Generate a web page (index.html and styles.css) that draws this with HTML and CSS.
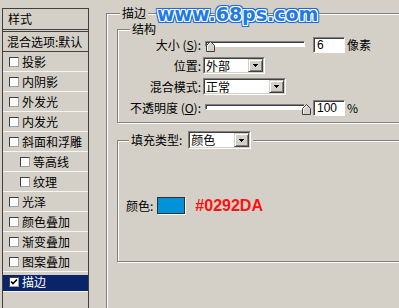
FILE: index.html
```html
<!DOCTYPE html>
<html lang="zh-CN">
<head>
    <meta charset="UTF-8">
    <title>图层样式 - 描边</title>
    <link rel="stylesheet" href="styles.css">
</head>
<body>
<div class="dialog">

    <!-- left: style list -->
    <div class="style-list">
        <div class="list-head">样式</div>
        <div class="list-blend">混合选项:默认</div>
        <div class="list-item"><span class="check"></span>投影</div>
        <div class="list-item"><span class="check"></span>内阴影</div>
        <div class="list-item"><span class="check"></span>外发光</div>
        <div class="list-item"><span class="check"></span>内发光</div>
        <div class="list-item"><span class="check"></span>斜面和浮雕</div>
        <div class="list-item sub"><span class="check"></span>等高线</div>
        <div class="list-item sub"><span class="check"></span>纹理</div>
        <div class="list-item"><span class="check"></span>光泽</div>
        <div class="list-item"><span class="check"></span>颜色叠加</div>
        <div class="list-item"><span class="check"></span>渐变叠加</div>
        <div class="list-item"><span class="check"></span>图案叠加</div>
        <div class="list-item selected">
            <span class="check"><svg width="8" height="8" viewBox="0 0 8 8"><path d="M1 3.5l2 2 4-4" fill="none" stroke="#000" stroke-width="1.6"/></svg></span>描边
        </div>
    </div>

    <!-- right: stroke settings -->
    <div class="stroke-box">
        <span class="legend">描边</span>

        <div class="group structure">
            <span class="legend">结构</span>
            <div class="field">
                <label>大小 (<u>S</u>):</label>
                <div class="slider">
                    <span class="track"></span>
                    <svg class="thumb" style="left:1px" width="9" height="11" viewBox="0 0 9 11"><path d="M0.5 10.5V4.5L4.5 0.5L8.5 4.5V10.5Z" fill="#d4d0c8" stroke="#404040"/><path d="M1.5 9.5V4.9L4.5 1.9" fill="none" stroke="#fff"/></svg>
                </div>
                <span class="textbox">6</span>
                <span class="unit">像素</span>
            </div>
            <div class="field">
                <label>位置:</label>
                <div class="select pos">
                    <div class="select-inner">
                        <span class="select-value">外部</span>
                        <span class="select-btn"><svg width="5" height="3" viewBox="0 0 5 3"><path d="M0 0h5v1H0zM1 1h3v1H1zM2 2h1v1H2z" fill="#000"/></svg></span>
                    </div>
                </div>
            </div>
            <div class="field">
                <label>混合模式:</label>
                <div class="select mode">
                    <div class="select-inner">
                        <span class="select-value">正常</span>
                        <span class="select-btn"><svg width="5" height="3" viewBox="0 0 5 3"><path d="M0 0h5v1H0zM1 1h3v1H1zM2 2h1v1H2z" fill="#000"/></svg></span>
                    </div>
                </div>
            </div>
            <div class="field">
                <label>不透明度 (<u>O</u>):</label>
                <div class="slider">
                    <span class="track"></span>
                    <svg class="thumb" style="left:97px" width="9" height="11" viewBox="0 0 9 11"><path d="M0.5 10.5V4.5L4.5 0.5L8.5 4.5V10.5Z" fill="#d4d0c8" stroke="#404040"/><path d="M1.5 9.5V4.9L4.5 1.9" fill="none" stroke="#fff"/></svg>
                </div>
                <span class="textbox">100</span>
                <span class="unit">%</span>
            </div>
        </div>

        <div class="group fill">
            <div class="legend fill-legend">
                <span>填充类型:</span>
                <div class="select type">
                    <div class="select-inner">
                        <span class="select-value">颜色</span>
                        <span class="select-btn"><svg width="5" height="3" viewBox="0 0 5 3"><path d="M0 0h5v1H0zM1 1h3v1H1zM2 2h1v1H2z" fill="#000"/></svg></span>
                    </div>
                </div>
            </div>
            <div class="color-row">
                <span>颜色:</span>
                <span class="swatch"></span>
                <span class="hex">#0292DA</span>
            </div>
        </div>
    </div>

    <div class="watermark">www.68ps.com</div>
</div>
</body>
</html>
```

FILE: styles.css
```css
body {
    margin: 0;
    background: #d4d0c8;
    font-family: "Noto Sans CJK SC", "Liberation Sans", sans-serif;
    font-size: 12px;
    color: #000;
    overflow: hidden;
}

.dialog {
    position: relative;
    display: flex;
    align-items: flex-start;
    width: 399px;
    height: 308px;
    padding: 8px 0 0 2px;
    box-sizing: border-box;
    overflow: hidden;
}

/* Style list */
.style-list {
    flex-shrink: 0;
    width: 85px;
    height: 320px;
    border: 1px solid #404040;
}

.list-head {
    height: 20px;
    line-height: 20px;
    padding-left: 5px;
    border-bottom: 3px double #404040;
}

.list-blend {
    height: 19px;
    line-height: 19px;
    padding-left: 4px;
    border-bottom: 1px solid #404040;
    white-space: nowrap;
}

.list-item {
    display: flex;
    align-items: center;
    height: 19px;
    line-height: 19px;
    padding-left: 6px;
    border-bottom: 1px solid #f6f5f2;
}

.list-item.sub {
    padding-left: 17px;
}

.list-item.selected {
    color: #fff;
    background: linear-gradient(#0a246a, #0a246a) no-repeat 0 3px / 100% 16px;
}

.check {
    display: flex;
    align-items: center;
    justify-content: center;
    width: 10px;
    height: 10px;
    margin-right: 3px;
    box-sizing: border-box;
    border: 1px solid;
    border-color: #404040 #a0a0a0 #a0a0a0 #404040;
    background: #fff;
}

/* Stroke settings */
.stroke-box {
    position: relative;
    flex-shrink: 0;
    width: 320px;
    height: 320px;
    margin: 5px 0 0 17px;
    padding: 15px 0 0 10px;
    box-sizing: border-box;
    border-left: 1px solid #808080;
    border-top: 1px solid #808080;
    box-shadow: inset 1px 1px 0 #fff;
}

.legend {
    position: absolute;
    padding: 0 2px;
    line-height: 14px;
    background: #d4d0c8;
}

.stroke-box > .legend {
    left: 13px;
    top: -8px;
}

.group {
    position: relative;
    width: 300px;
    box-sizing: border-box;
    border: 1px solid #808080;
    box-shadow: inset 1px 1px 0 #fff, 1px 1px 0 #fff;
}

.structure {
    padding: 6px 0;
    border-top-color: transparent;
    box-shadow: inset 1px 0 0 #fff, 1px 1px 0 #fff;
}

.structure::before {
    content: "";
    position: absolute;
    top: -1px;
    left: -1px;
    width: 13px;
    height: 1px;
    background: #808080;
    box-shadow: 1px 1px 0 #fff;
}

.structure > .legend {
    left: 12px;
    top: -8px;
}

.field {
    display: flex;
    align-items: center;
    height: 17px;
}

.field + .field {
    margin-top: 4px;
}

.field label {
    width: 83px;
    text-align: right;
    white-space: nowrap;
}

.slider {
    position: relative;
    width: 100px;
    height: 17px;
    margin-left: 4px;
}

.track {
    position: absolute;
    left: 0;
    top: 5px;
    width: 100px;
    height: 6px;
    box-sizing: border-box;
    border: 1px solid;
    border-color: #808080 #fff #fff #808080;
    background: #fff;
    box-shadow: inset 1px 1px 0 #404040;
}

.thumb {
    position: absolute;
    top: 5px;
    display: block;
}

.textbox {
    width: 32px;
    height: 16px;
    margin-left: 8px;
    padding-left: 3px;
    box-sizing: border-box;
    border: 1px solid;
    border-color: #808080 #fff #fff #808080;
    box-shadow: inset 1px 1px 0 #404040;
    background: #fff;
    font-family: "Liberation Sans", sans-serif;
    line-height: 14px;
}

.unit {
    margin-left: 2px;
}

.select {
    display: flex;
    height: 17px;
    margin-left: 2px;
    box-sizing: border-box;
    border: 1px solid;
    border-color: #808080 #fff #fff #808080;
}

.select.pos { width: 62px; }
.select.mode { width: 83px; }
.select.type { width: 63px; height: 18px; margin-left: 6px; }

.select-inner {
    flex: 1;
    display: flex;
    align-items: stretch;
    border: 1px solid;
    border-color: #404040 #d4d0c8 #d4d0c8 #404040;
    background: #fff;
}

.select-value {
    flex: 1;
    padding-left: 1px;
    line-height: 13px;
}

.select-btn {
    display: flex;
    align-items: center;
    justify-content: center;
    width: 15px;
    box-sizing: border-box;
    border: 1px solid;
    border-color: #d4d0c8 #404040 #404040 #d4d0c8;
    box-shadow: inset 1px 1px 0 #fff, inset -1px -1px 0 #808080;
    background: #d4d0c8;
}

.fill {
    height: 122px;
    margin-top: 17px;
    padding-top: 56px;
}

.fill-legend {
    left: 11px;
    top: -10px;
    display: flex;
    align-items: center;
    height: 18px;
}

.color-row {
    display: flex;
    align-items: center;
    height: 17px;
    padding-left: 8px;
}

.swatch {
    width: 28px;
    height: 17px;
    margin-left: 4px;
    box-sizing: border-box;
    border: 1px solid #303030;
    background: #0292da;
    box-shadow: 1px 1px 0 #fff;
}

.hex {
    margin-left: 10px;
    font-family: "Liberation Sans", Arial, sans-serif;
    font-size: 16px;
    font-weight: bold;
    color: #ff1010;
}

/* Site watermark */
.watermark {
    position: absolute;
    left: 157px;
    top: 3px;
    font-family: "DejaVu Sans", sans-serif;
    font-size: 19px;
    font-weight: bold;
    line-height: 22px;
    color: #1e7be6;
    text-shadow:
        1px 0 #fff, -1px 0 #fff, 0 1px #fff, 0 -1px #fff,
        1px 1px #fff, -1px -1px #fff, 1px -1px #fff, -1px 1px #fff,
        2px 0 #1b6ad6, -2px 0 #1b6ad6, 0 2px #1b6ad6, 0 -2px #1b6ad6,
        2px 2px #1b6ad6, -2px -2px #1b6ad6, 2px -2px #1b6ad6, -2px 2px #1b6ad6,
        0 0 3px #1b6ad6;
}
```
